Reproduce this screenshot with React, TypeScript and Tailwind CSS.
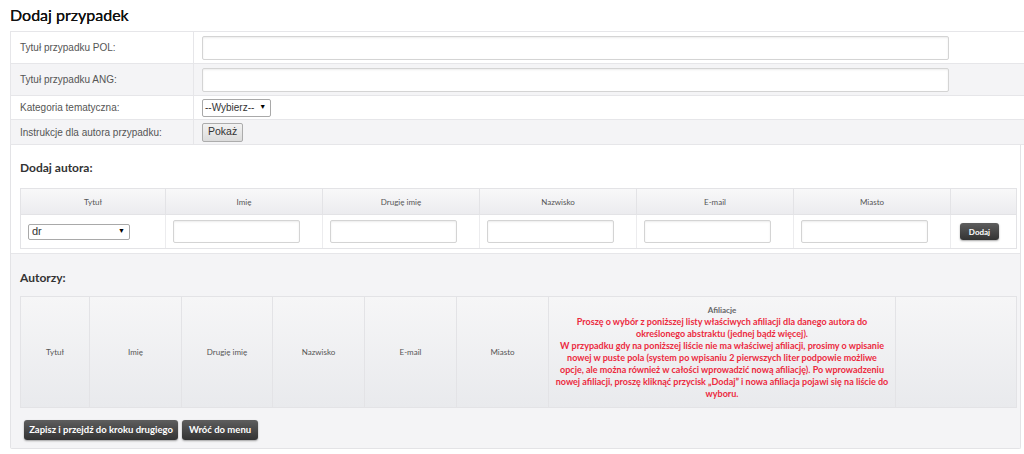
const labelCls = "font-['Liberation_Sans',Arial,sans-serif] text-[10px] text-[#555]";
const thCls = "flex items-center justify-center font-['Lato',sans-serif] text-[8px] text-[#555]";

function TextInput({ className = '' }: { className?: string }) {
  return (
    <div
      className={`bg-white border border-[#d4d4d4] rounded-[2px] shadow-[inset_0_1px_2px_rgba(0,0,0,0.08)] ${className}`}
    />
  );
}

function DarkButton({ children, className = '' }: { children: React.ReactNode; className?: string }) {
  return (
    <div
      className={`flex items-center justify-center rounded-[3px] bg-gradient-to-b from-[#5e5e5e] to-[#333] text-white font-bold font-['Lato',sans-serif] shadow-[0_1px_2px_rgba(0,0,0,0.35)] ${className}`}
    >
      {children}
    </div>
  );
}

function FormRow({ label, gray, h, children }: { label: string; gray?: boolean; h: string; children: React.ReactNode }) {
  return (
    <div className={`flex border-b border-[#e6e6e9] ${h} ${gray ? 'bg-[#f4f4f6]' : 'bg-white'}`}>
      <div className={`w-[183px] shrink-0 flex items-center pl-[9px] border-r border-[#e6e6e9] ${labelCls}`}>{label}</div>
      <div className="flex-1 flex items-center pl-[8px]">{children}</div>
    </div>
  );
}

export default function App() {
  const authorCols = ['Tytuł', 'Imię', 'Drugię imię', 'Nazwisko', 'E-mail', 'Miasto', ''];
  const listCols = ['Tytuł', 'Imię', 'Drugię imię', 'Nazwisko', 'E-mail', 'Miasto'];

  return (
    <div className="w-[1024px] h-[454px] bg-white overflow-hidden">
      <h1 className="pl-[10px] pt-[3px] h-[31px] font-['Lato',sans-serif] text-[16px] text-[#111] [text-shadow:0_0_0.2px_#111]">Dodaj przypadek</h1>

      <div className="ml-[10px] border-l border-t border-[#e6e6e9]">
        <FormRow label="Tytuł przypadku POL:" h="h-[32px]">
          <TextInput className="w-[747px] h-[24px]" />
        </FormRow>
        <FormRow label="Tytuł przypadku ANG:" gray h="h-[32px]">
          <TextInput className="w-[747px] h-[24px]" />
        </FormRow>
        <FormRow label="Kategoria tematyczna:" h="h-[24px]">
          <div className="flex items-center gap-[5px] h-[18px] px-[2px] bg-white border border-[#a9a9a9] rounded-[2px] font-['Liberation_Sans',Arial,sans-serif] text-[10px] text-[#333]">
            <span>--Wybierz--</span>
            <span className="text-[7px] text-black pr-[2px]">▼</span>
          </div>
        </FormRow>
        <FormRow label="Instrukcje dla autora przypadku:" gray h="h-[25px]">
          <div className="flex items-center h-[19px] px-[5px] bg-gradient-to-b from-[#f2f2f2] to-[#dcdcdc] border border-[#acacac] rounded-[2px] font-['Liberation_Sans',Arial,sans-serif] text-[10.5px] text-[#333]">
            Pokaż
          </div>
        </FormRow>
      </div>

      <div className="ml-[10px] w-[1011px] border-l border-r border-b border-[#e3e3e6] rounded-b-[2px]">
        <section className="bg-white pl-[9px] pt-[14px] pb-[4px] border-b border-[#e6e6e9]">
          <h2 className="h-[29px] font-['Lato',sans-serif] font-bold text-[12px] text-[#333]">Dodaj autora:</h2>
          <div className="w-[997px] border border-[#e3e3e6]">
            <div className="grid grid-cols-[145px_157px_157px_157px_157px_157px_67px] h-[26px] bg-gradient-to-b from-[#f8f8f9] to-[#ececef] border-b border-[#e3e3e6]">
              {authorCols.map((c, i) => (
                <div key={i} className={`${thCls} ${i < 6 ? 'border-r border-[#e3e3e6]' : ''}`}>{c}</div>
              ))}
            </div>
            <div className="grid grid-cols-[145px_157px_157px_157px_157px_157px_67px] h-[33px] bg-white">
              <div className="flex items-center pl-[7px] border-r border-[#ececee]">
                <div className="flex items-center justify-between w-[102px] h-[16px] pl-[3px] pr-[4px] border border-[#a9a9a9] rounded-[2px] font-['Liberation_Sans',Arial,sans-serif] text-[11px] text-[#333]">
                  <span>dr</span>
                  <span className="text-[7px] text-black">▼</span>
                </div>
              </div>
              {[0, 1, 2, 3, 4].map((i) => (
                <div key={i} className="flex items-center pl-[7px] border-r border-[#ececee]">
                  <TextInput className="w-[127px] h-[23px]" />
                </div>
              ))}
              <div className="flex items-center pl-[9px]">
                <DarkButton className="w-[39px] h-[17px] text-[8px]">Dodaj</DarkButton>
              </div>
            </div>
          </div>
        </section>

        <section className="bg-[#f4f4f6] pl-[9px] pt-[15px] pb-[8px]">
          <h2 className="h-[27px] font-['Lato',sans-serif] font-bold text-[12px] text-[#333]">Autorzy:</h2>
          <div className="grid grid-cols-[69px_92px_91px_92px_92px_92px_347px_122px] w-[997px] h-[112px] border border-[#e3e3e6] bg-gradient-to-b from-[#f6f6f7] to-[#e9eaed]">
            {listCols.map((c) => (
              <div key={c} className={`${thCls} border-r border-[#e3e3e6]`}>{c}</div>
            ))}
            <div className="flex flex-col items-center justify-center border-r border-[#e3e3e6] font-['Lato',sans-serif] text-center leading-[12px]">
              <div className="text-[8px] font-bold text-[#666]">Afiliacje</div>
              <div className="text-[9px] font-bold text-[#ec2a3e] whitespace-nowrap">
                Proszę o wybór z poniższej listy właściwych afiliacji dla danego autora do
                <br />
                określonego abstraktu (jednej bądź więcej).
                <br />
                W przypadku gdy na poniższej liście nie ma właściwej afiliacji, prosimy o wpisanie
                <br />
                nowej w puste pola (system po wpisaniu 2 pierwszych liter podpowie możliwe
                <br />
                opcje, ale można również w całości wprowadzić nową afiliację). Po wprowadzeniu
                <br />
                nowej afiliacji, proszę kliknąć przycisk „Dodaj” i nowa afiliacja pojawi się na liście do
                <br />
                wyboru.
              </div>
            </div>
            <div />
          </div>
          <div className="flex gap-[4px] pl-[4px] mt-[12px]">
            <DarkButton className="w-[154px] h-[20px] text-[9.5px]">Zapisz i przejdź do kroku drugiego</DarkButton>
            <DarkButton className="w-[76px] h-[20px] text-[9.5px]">Wróć do menu</DarkButton>
          </div>
        </section>
      </div>
    </div>
  );
}
